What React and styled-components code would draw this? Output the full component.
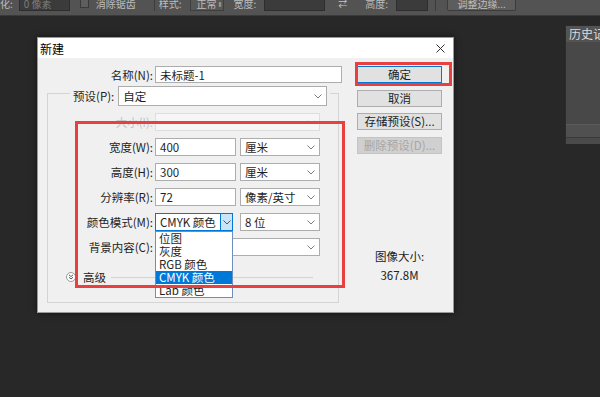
import React from "react";
import styled, { createGlobalStyle } from "styled-components";

const GlobalStyle = createGlobalStyle`
  html, body {
    margin: 0;
    padding: 0;
    background: #282828;
  }
  body {
    font-family: "Noto Sans CJK SC", "Noto Sans", sans-serif;
  }
  * {
    box-sizing: border-box;
  }
`;

function Chevron({ color = "#7c7c7c" }) {
  return (
    <svg width="8" height="5" viewBox="0 0 8 5">
      <path d="M0.5 0.5 L4 4 L7.5 0.5" fill="none" stroke={color} strokeWidth="1" />
    </svg>
  );
}

function App() {
  return (
    <Screen>
      <GlobalStyle />
      <OptionsBar>
        <BarText>化:</BarText>
        <BarField $w={51} style={{ marginLeft: 6 }}>0 像素</BarField>
        <BarCheck />
        <BarText style={{ marginLeft: 7 }}>消除锯齿</BarText>
        <BarDivider style={{ marginLeft: 18 }} />
        <BarText style={{ marginLeft: 4 }}>样式:</BarText>
        <BarSelect>
          正常<span>⬍</span>
        </BarSelect>
        <BarText style={{ marginLeft: 10 }}>宽度:</BarText>
        <BarField $w={61} style={{ marginLeft: 8 }} />
        <BarSwap>⇄</BarSwap>
        <BarText style={{ marginLeft: 18 }}>高度:</BarText>
        <BarField $w={32} style={{ marginLeft: 8 }} />
        <BarDivider style={{ marginLeft: 7 }} />
        <BarButton>调整边缘...</BarButton>
      </OptionsBar>

      <Workspace>
        <Dialog>
          <TitleBar>
            <span>新建</span>
            <svg width="9" height="9" viewBox="0 0 9 9">
              <path d="M0.5 0.5 L8.5 8.5 M8.5 0.5 L0.5 8.5" stroke="#333" strokeWidth="1" />
            </svg>
          </TitleBar>
          <Body>
            <MainCol>
              <NameRow>
                <Label>名称(N):</Label>
                <TextBox $w={187} $h={17}>未标题-1</TextBox>
              </NameRow>

              <GroupBox>
                <Legend>
                  <Label>预设(P):</Label>
                  <Select $w={209} $h={20}>
                    自定
                    <Chevron />
                  </Select>
                </Legend>

                <FormGrid>
                  <Label $disabled>大小(I):</Label>
                  <Select $w={165} $disabled>
                    <span />
                    <Chevron color="#d0d0d0" />
                  </Select>

                  <Label>宽度(W):</Label>
                  <FieldPair>
                    <TextBox $w={81}>400</TextBox>
                    <Select $w={80}>
                      厘米
                      <Chevron />
                    </Select>
                  </FieldPair>

                  <Label>高度(H):</Label>
                  <FieldPair>
                    <TextBox $w={81}>300</TextBox>
                    <Select $w={80}>
                      厘米
                      <Chevron />
                    </Select>
                  </FieldPair>

                  <Label>分辨率(R):</Label>
                  <FieldPair>
                    <TextBox $w={81}>72</TextBox>
                    <Select $w={80}>
                      像素/英寸
                      <Chevron />
                    </Select>
                  </FieldPair>

                  <Label>颜色模式(M):</Label>
                  <FieldPair>
                    <ComboWrap>
                      <Select $w={78} $open>
                        CMYK 颜色
                        <ArrowBox>
                          <Chevron color="#555" />
                        </ArrowBox>
                      </Select>
                      <DropList>
                        <DropItem>位图</DropItem>
                        <DropItem>灰度</DropItem>
                        <DropItem>RGB 颜色</DropItem>
                        <DropItem $active>CMYK 颜色</DropItem>
                        <DropItem>Lab 颜色</DropItem>
                      </DropList>
                    </ComboWrap>
                    <Select $w={80}>
                      8 位
                      <Chevron />
                    </Select>
                  </FieldPair>

                  <Label>背景内容(C):</Label>
                  <Select $w={165}>
                    <span />
                    <Chevron />
                  </Select>
                </FormGrid>

                <AdvancedRow>
                  <svg width="10" height="10" viewBox="0 0 10 10">
                    <circle cx="5" cy="5" r="4.5" fill="#fff" stroke="#9a9a9a" />
                    <path d="M3 2.8 L5 4.6 L7 2.8 M3 5.2 L5 7 L7 5.2" fill="none" stroke="#444" strokeWidth="0.9" />
                  </svg>
                  <AdvancedText>高级</AdvancedText>
                  <AdvancedLine />
                </AdvancedRow>
              </GroupBox>
            </MainCol>

            <SideCol>
              <SideButton $primary>确定</SideButton>
              <SideButton>取消</SideButton>
              <SideButton>存储预设(S)...</SideButton>
              <SideButton $disabled>删除预设(D)...</SideButton>
              <ImageSize>
                图像大小:
                <br />
                367.8M
              </ImageSize>
            </SideCol>
          </Body>

          <Highlight $x={37} $y={83} $w={270} $h={167} />
          <Highlight $x={317} $y={24} $w={97} $h={24} />
        </Dialog>

        <HistoryPanel>
          <PanelHeader>历史记录</PanelHeader>
          <PanelBody />
          <PanelFooter />
          <PanelBottom />
        </HistoryPanel>
      </Workspace>
    </Screen>
  );
}

const Screen = styled.div`
  width: 600px;
  height: 397px;
  overflow: hidden;
  background: #282828;
  display: flex;
  flex-direction: column;
`;

const OptionsBar = styled.div`
  height: 16px;
  flex-shrink: 0;
  background: #535353;
  border-bottom: 1px solid #3a3a3a;
  display: flex;
  align-items: flex-end;
  padding-bottom: 4px;
  overflow: hidden;
  font-size: 10px;
  color: #bdbdbd;
  white-space: nowrap;
`;

const BarText = styled.span`
  line-height: 14px;
  height: 14px;
`;

const BarField = styled.div`
  width: ${(p) => p.$w}px;
  height: 14px;
  background: #3b3b3b;
  border: 1px solid #2e2e2e;
  color: #7d7d7d;
  padding-left: 4px;
  line-height: 12px;
  flex-shrink: 0;
`;

const BarCheck = styled.div`
  width: 9px;
  height: 10px;
  margin-left: 10px;
  margin-bottom: 3px;
  background: #5e5e5e;
  border: 1px solid #3a3a3a;
  flex-shrink: 0;
`;

const BarDivider = styled.div`
  width: 1px;
  height: 15px;
  background: #3c3c3c;
  flex-shrink: 0;
`;

const BarSelect = styled.div`
  width: 34px;
  height: 14px;
  margin-left: 8px;
  border: 1px solid #3f3f3f;
  background: #575757;
  display: flex;
  justify-content: space-between;
  padding: 0 2px 0 6px;
  line-height: 12px;
  flex-shrink: 0;

  span {
    font-size: 7px;
    color: #9a9a9a;
  }
`;

const BarSwap = styled.span`
  margin-left: 13px;
  font-size: 9px;
  line-height: 14px;
  color: #c8c8c8;
`;

const BarButton = styled.div`
  width: 69px;
  height: 14px;
  margin-left: 11px;
  background: #5d5d5d;
  border: 1px solid #3c3c3c;
  border-radius: 2px;
  text-align: center;
  line-height: 12px;
  flex-shrink: 0;
`;

const Workspace = styled.div`
  flex: 1;
  display: flex;
  align-items: flex-start;
`;

const Dialog = styled.div`
  position: relative;
  width: 417px;
  height: 276px;
  margin-left: 37px;
  margin-top: 21px;
  background: #f0f0f0;
  border: 1px solid #9a9a9a;
  box-shadow: 0 0 6px rgba(0, 0, 0, 0.5);
  flex-shrink: 0;
  font-size: 11.5px;
  color: #1e1e1e;
`;

const TitleBar = styled.div`
  height: 20px;
  background: #ffffff;
  display: flex;
  align-items: center;
  justify-content: space-between;
  padding: 0 8px 0 2px;
  font-size: 12px;
  color: #000;
`;

const Body = styled.div`
  display: flex;
  padding-top: 8px;
  height: 254px;
`;

const MainCol = styled.div`
  width: 319px;
  flex-shrink: 0;
`;

const SideCol = styled.div`
  width: 85px;
  display: flex;
  flex-direction: column;
  gap: 6.5px;
`;

const NameRow = styled.div`
  display: grid;
  grid-template-columns: 115px 187px;
  column-gap: 2px;
  align-items: center;
  height: 17px;
`;

const Label = styled.span`
  text-align: right;
  white-space: nowrap;
  line-height: 16px;
  color: ${(p) => (p.$disabled ? "#c4c4c4" : "#1e1e1e")};
`;

const TextBox = styled.div`
  width: ${(p) => p.$w}px;
  height: ${(p) => p.$h || 18}px;
  background: #fff;
  border: 1px solid #adadad;
  padding-left: 4px;
  display: flex;
  align-items: center;
  white-space: nowrap;
`;

const Select = styled.div`
  width: ${(p) => p.$w}px;
  height: ${(p) => p.$h || 18}px;
  background: ${(p) => (p.$disabled ? "#f6f6f6" : "#fff")};
  border: 1px solid ${(p) => (p.$open ? "#0078d7" : p.$disabled ? "#dedede" : "#adadad")};
  padding: ${(p) => (p.$open ? "0 0 0 4px" : "0 4px 0 4px")};
  display: flex;
  align-items: center;
  justify-content: space-between;
  white-space: nowrap;
`;

const ArrowBox = styled.div`
  width: 12px;
  align-self: stretch;
  background: #cce4f7;
  border-left: 1px solid #0078d7;
  display: flex;
  align-items: center;
  justify-content: center;
`;

const GroupBox = styled.div`
  width: 292px;
  height: 210px;
  margin-left: 9px;
  margin-top: 10px;
  border: 1px solid #d4d4d4;
`;

const Legend = styled.div`
  display: flex;
  align-items: center;
  gap: 4px;
  width: fit-content;
  margin-top: -8px;
  margin-left: 22px;
  padding: 0 3px;
  background: #f0f0f0;
`;

const FormGrid = styled.div`
  display: grid;
  grid-template-columns: 105px auto;
  column-gap: 2px;
  row-gap: 7px;
  align-items: center;
  margin-top: 7px;
`;

const FieldPair = styled.div`
  display: grid;
  grid-template-columns: 81px 80px;
  column-gap: 4px;
`;

const ComboWrap = styled.div`
  position: relative;
`;

const DropList = styled.div`
  position: absolute;
  top: 100%;
  left: 0;
  width: 78px;
  background: #fff;
  border: 1px solid #6d8fbd;
  z-index: 5;
`;

const DropItem = styled.div`
  height: 13px;
  line-height: 13px;
  padding-left: 3px;
  white-space: nowrap;
  background: ${(p) => (p.$active ? "#0078d7" : "transparent")};
  color: ${(p) => (p.$active ? "#fff" : "#1e1e1e")};
`;

const AdvancedRow = styled.div`
  display: flex;
  align-items: center;
  height: 14px;
  margin-top: 14px;
  margin-left: 18px;
`;

const AdvancedText = styled.span`
  margin-left: 7px;
  line-height: 14px;
`;

const AdvancedLine = styled.div`
  width: 202px;
  height: 1px;
  margin-left: 5px;
  background: #d4d4d4;
`;

const SideButton = styled.div`
  height: 17px;
  width: 85px;
  text-align: center;
  line-height: 15px;
  background: ${(p) => (p.$disabled ? "#d0d0d0" : "#e1e1e1")};
  border: 1px solid ${(p) => (p.$primary ? "#0078d7" : p.$disabled ? "#c4c4c4" : "#adadad")};
  color: ${(p) => (p.$disabled ? "#a6a6a6" : "#1e1e1e")};
  white-space: nowrap;
`;

const ImageSize = styled.div`
  margin-top: 87px;
  text-align: center;
  line-height: 19px;
  color: #222;
`;

const Highlight = styled.div`
  position: absolute;
  left: ${(p) => p.$x}px;
  top: ${(p) => p.$y}px;
  width: ${(p) => p.$w}px;
  height: ${(p) => p.$h}px;
  border: 3px solid #e8403f;
  pointer-events: none;
  z-index: 10;
`;

const HistoryPanel = styled.div`
  width: 35px;
  height: 119px;
  margin-left: auto;
  margin-top: 9px;
  background: #474747;
  border-left: 1px solid #2c2c2c;
  border-top: 1px solid #2c2c2c;
  display: flex;
  flex-direction: column;
  overflow: hidden;
  flex-shrink: 0;
`;

const PanelHeader = styled.div`
  height: 16px;
  background: #535353;
  color: #dcdcdc;
  font-size: 12px;
  line-height: 16px;
  padding-left: 3px;
  white-space: nowrap;
`;

const PanelBody = styled.div`
  flex: 1;
  background: #484848;
`;

const PanelFooter = styled.div`
  height: 14px;
  background: #505050;
  border-top: 1px solid #5a5a5a;
  border-bottom: 1px solid #3a3a3a;
`;

const PanelBottom = styled.div`
  height: 6px;
  background: #4a4a4a;
`;

export default App;
